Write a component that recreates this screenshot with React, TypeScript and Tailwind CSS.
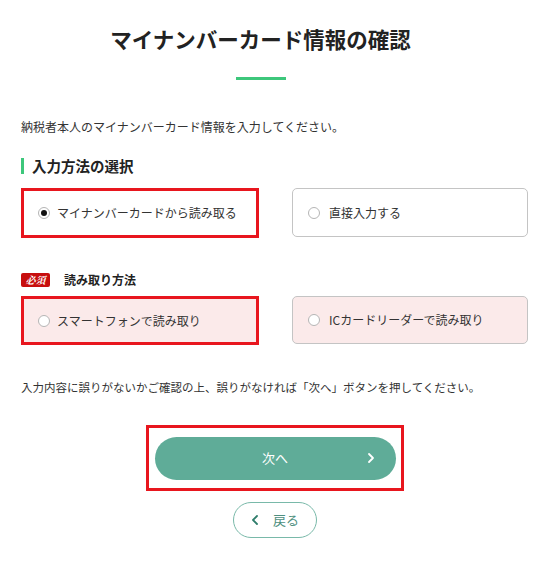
import React from "react";

const font = { fontFamily: '"Noto Sans CJK JP", "Noto Sans", sans-serif' };

function Radio({ checked }: { checked?: boolean }) {
  return (
    <span className="flex h-[12px] w-[12px] shrink-0 items-center justify-center rounded-full border border-[#b5b5b5] bg-white">
      {checked && <span className="h-[6px] w-[6px] rounded-full bg-[#111]" />}
    </span>
  );
}

export default function App() {
  return (
    <div className="w-[550px] h-[562px] bg-white text-[#333] overflow-hidden" style={font}>
      <div className="flex flex-col px-[21px]">
        <div className="flex flex-col items-center pr-[29px]">
          <h1 className="mt-[25px] text-center text-[21.5px] leading-[28px] font-bold text-[#222]">
            マイナンバーカード情報の確認
          </h1>
          <div className="mt-[24px] h-[3px] w-[50px] bg-[#3dc77b]" />
        </div>
        <p className="mt-[38px] text-[12px] leading-[18px]">
          納税者本人のマイナンバーカード情報を入力してください。
        </p>
        <div className="mt-[22px] flex items-center h-[16px]">
          <span className="h-[16px] w-[3px] bg-[#3dc77b]" />
          <span className="ml-[8px] text-[14.5px] font-bold leading-[16px] text-[#222]">入力方法の選択</span>
        </div>
        <div className="mt-[14px] grid grid-cols-[238px_236px] gap-x-[33px]">
          <div className="flex h-[50px] items-center border-[3px] border-[#e8161e] bg-white pl-[14px]">
            <Radio checked />
            <span className="ml-[7px] text-[12px]">マイナンバーカードから読み取る</span>
          </div>
          <div className="flex h-[49px] items-center rounded-[5px] border border-[#c4c4c4] bg-white pl-[15px]">
            <Radio />
            <span className="ml-[9px] text-[12px]">直接入力する</span>
          </div>
        </div>
        <div className="mt-[35px] flex items-center h-[14px]">
          <span
            className="flex h-[14px] w-[29px] items-center justify-center rounded-[2px] bg-[#c70e0e] text-[10px] font-bold italic leading-none text-white"
            style={{ fontFamily: '"Noto Serif CJK JP", "Noto Sans CJK JP", serif' }}
          >
            必須
          </span>
          <span className="ml-[14px] text-[12px] font-bold text-[#222]">読み取り方法</span>
        </div>
        <div className="mt-[9px] grid grid-cols-[238px_236px] gap-x-[33px]">
          <div className="flex h-[49px] items-center border-[3px] border-[#e8161e] bg-[#fbeaea] pl-[14px]">
            <Radio />
            <span className="ml-[7px] text-[12px]">スマートフォンで読み取り</span>
          </div>
          <div className="flex h-[48px] items-center rounded-[5px] border border-[#c4c4c4] bg-[#fbeaea] pl-[15px]">
            <Radio />
            <span className="ml-[9px] text-[12px]">ICカードリーダーで読み取り</span>
          </div>
        </div>
        <p className="mt-[33px] text-[11.5px] leading-[18px]">
          入力内容に誤りがないかご確認の上、誤りがなければ「次へ」ボタンを押してください。
        </p>
        <div className="mx-auto mt-[29px] flex h-[66px] w-[258px] items-center justify-center border-[3px] border-[#e8161e]">
          <button className="relative flex h-[43px] w-[241px] items-center justify-center rounded-full bg-[#5fac98] text-[13px] text-white">
            次へ
            <svg className="absolute right-[21px] top-1/2 -translate-y-1/2" width="8" height="12" viewBox="0 0 8 12">
              <path d="M2 2 L6 6 L2 10" fill="none" stroke="white" strokeWidth="1.8" strokeLinecap="round" strokeLinejoin="round" />
            </svg>
          </button>
        </div>
        <button className="mx-auto mt-[11px] flex h-[36px] w-[84px] items-center justify-center gap-[14px] rounded-full border border-[#79b9a9] bg-white text-[13px] text-[#4e8f80]">
          <svg width="8" height="12" viewBox="0 0 8 12">
            <path d="M6 2 L2 6 L6 10" fill="none" stroke="#2f7d6b" strokeWidth="1.8" strokeLinecap="round" strokeLinejoin="round" />
          </svg>
          <span>戻る</span>
        </button>
      </div>
    </div>
  );
}
